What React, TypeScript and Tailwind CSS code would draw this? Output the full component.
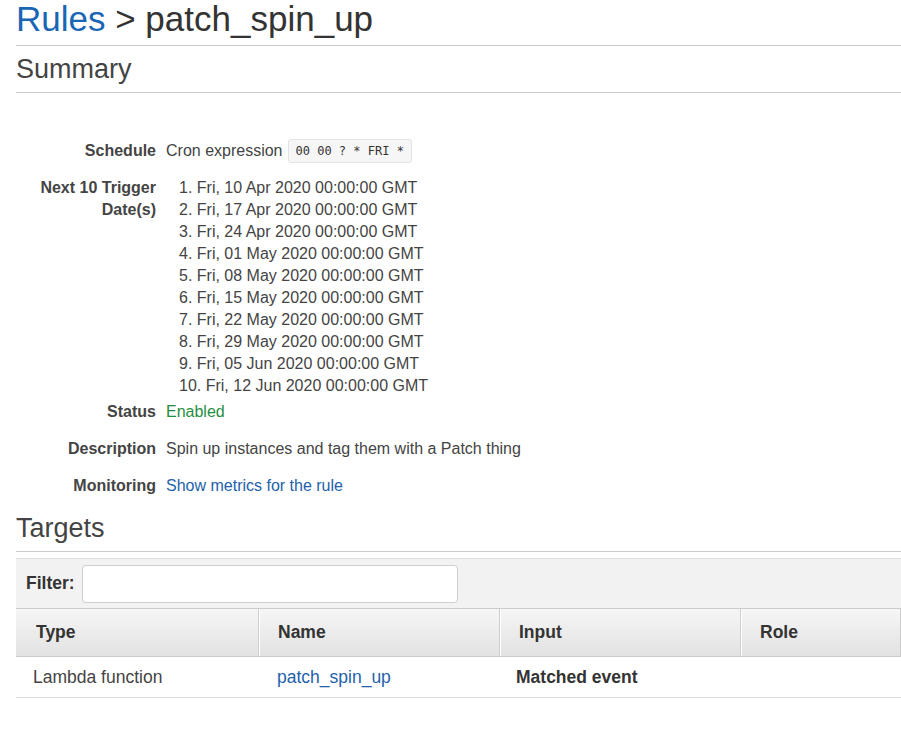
import React from "react";

const dates = [
  "1. Fri, 10 Apr 2020 00:00:00 GMT",
  "2. Fri, 17 Apr 2020 00:00:00 GMT",
  "3. Fri, 24 Apr 2020 00:00:00 GMT",
  "4. Fri, 01 May 2020 00:00:00 GMT",
  "5. Fri, 08 May 2020 00:00:00 GMT",
  "6. Fri, 15 May 2020 00:00:00 GMT",
  "7. Fri, 22 May 2020 00:00:00 GMT",
  "8. Fri, 29 May 2020 00:00:00 GMT",
  "9. Fri, 05 Jun 2020 00:00:00 GMT",
  "10. Fri, 12 Jun 2020 00:00:00 GMT",
];

function Label({ children }: { children: React.ReactNode }) {
  return (
    <div className="w-[140px] shrink-0 text-right font-bold text-[#444] text-[16px] leading-[22px]">
      {children}
    </div>
  );
}

export default function App() {
  return (
    <div className="w-[901px] h-[729px] overflow-hidden bg-white font-['Liberation_Sans',Arial,sans-serif] text-[#444]">
      <div className="pl-4">
        <h1 className="h-[46px] border-b border-[#cccccc] text-[35px] leading-[38px] text-[#333]">
          <span className="text-[#1866b4]">Rules</span> &gt; patch_spin_up
        </h1>
        <h2 className="mt-[8px] pb-[8px] border-b border-[#cccccc] text-[27px] leading-[30px] text-[#444]">
          Summary
        </h2>

        <div className="mt-[46px] flex flex-col text-[16px] leading-[22px]">
          <div className="flex items-center gap-[10px] h-[24px]">
            <Label>Schedule</Label>
            <div className="flex items-center">
              <span>Cron expression</span>
              <code className="ml-[5px] h-[24px] px-[7px] flex items-center rounded-[3px] border border-[#e3e3e3] bg-[#f6f6f6] font-['DejaVu_Sans_Mono',monospace] text-[12px] text-[#333]">
                00 00 ? * FRI *
              </code>
            </div>
          </div>

          <div className="mt-[14px] flex gap-[10px]">
            <Label>Next 10 Trigger Date(s)</Label>
            <div className="pl-[13px]">
              {dates.map((d) => (
                <div key={d}>{d}</div>
              ))}
            </div>
          </div>

          <div className="mt-[4px] flex gap-[10px]">
            <Label>Status</Label>
            <div className="text-[#1f8f3f]">Enabled</div>
          </div>

          <div className="mt-[15px] flex gap-[10px]">
            <Label>Description</Label>
            <div>Spin up instances and tag them with a Patch thing</div>
          </div>

          <div className="mt-[15px] flex gap-[10px]">
            <Label>Monitoring</Label>
            <div className="text-[#2361ab]">Show metrics for the rule</div>
          </div>
        </div>

        <h2 className="mt-[16px] pb-[8px] border-b border-[#cccccc] text-[27px] leading-[30px] text-[#444]">
          Targets
        </h2>

        <div className="mt-[6px] h-[50px] border-t border-[#dddddd] bg-[#f2f2f2] flex items-center pl-[10px] gap-[7px]">
          <span className="font-bold text-[17.5px] text-[#333]">Filter:</span>
          <div className="w-[376px] h-[38px] rounded-[4px] border border-[#cfcfcf] bg-white" />
        </div>

        <div className="grid grid-cols-[242px_241px_241px_161px] h-[49px] border-t border-b border-r border-[#cccccc] bg-gradient-to-b from-[#f6f6f6] to-[#e2e2e2] text-[17.5px] font-bold text-[#333]">
          <div className="flex items-center pl-[20px]">Type</div>
          <div className="flex items-center pl-[19px] border-l border-[#cfcfcf] shadow-[inset_1px_0_0_#ffffff]">Name</div>
          <div className="flex items-center pl-[19px] border-l border-[#cfcfcf] shadow-[inset_1px_0_0_#ffffff]">Input</div>
          <div className="flex items-center pl-[19px] border-l border-[#cfcfcf] shadow-[inset_1px_0_0_#ffffff]">Role</div>
        </div>

        <div className="grid grid-cols-[242px_241px_241px_161px] h-[41px] border-b border-[#dddddd] text-[17.5px] text-[#444]">
          <div className="flex items-center pl-[17px]">Lambda function</div>
          <div className="flex items-center pl-[19px] text-[#2361ab]">patch_spin_up</div>
          <div className="flex items-center pl-[17px] font-bold text-[#333]">Matched event</div>
          <div className="flex items-center pl-[19px]"></div>
        </div>
      </div>
    </div>
  );
}
